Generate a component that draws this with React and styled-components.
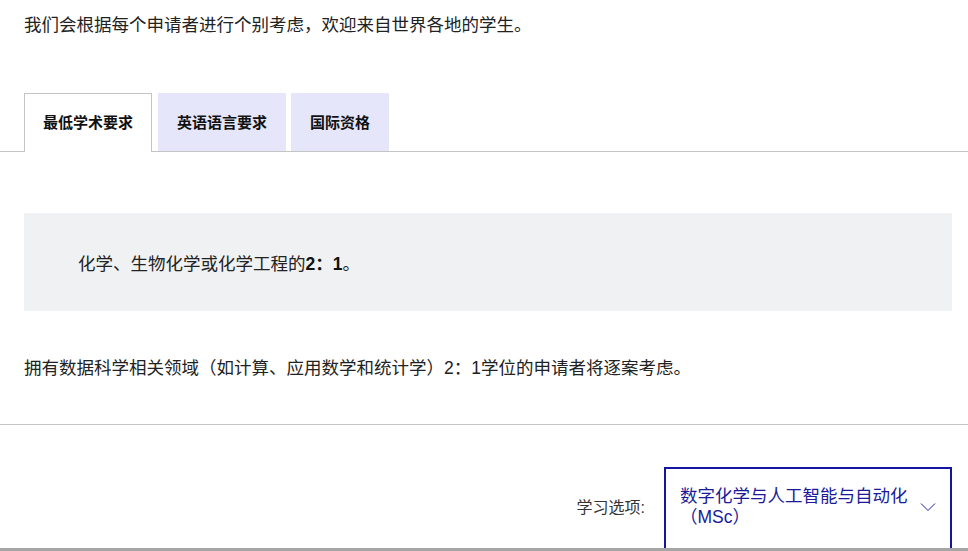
import styled, { createGlobalStyle } from 'styled-components';

const GlobalStyle = createGlobalStyle`
  body {
    margin: 0;
    background: #fff;
    color: #222;
    font-family: "Liberation Sans", "Noto Sans CJK SC", sans-serif;
  }
`;

const tabs = ['最低学术要求', '英语语言要求', '国际资格'];

const App = () => {
  return (
    <Page>
      <GlobalStyle />
      <Intro>我们会根据每个申请者进行个别考虑，欢迎来自世界各地的学生。</Intro>

      <TabBar>
        {tabs.map((t, i) => (
          <Tab key={t} active={i === 0}>{t}</Tab>
        ))}
      </TabBar>

      <Panel>
        <Callout>
          化学、生物化学或化学工程的<strong>2：1</strong>。
        </Callout>
        <Note>拥有数据科学相关领域（如计算、应用数学和统计学）2：1学位的申请者将逐案考虑。</Note>
      </Panel>

      <Footer>
        <Label>学习选项:</Label>
        <Select>
          <SelectText>数字化学与人工智能与自动化（MSc）</SelectText>
          <svg width="16" height="10" viewBox="0 0 16 10" fill="none">
            <path d="M1 1.5l7 7 7-7" stroke="#1a1a9a" strokeWidth="1" />
          </svg>
        </Select>
      </Footer>
    </Page>
  );
};

export default App;

const Page = styled.div`
  width: 968px;
  height: 551px;
  overflow: hidden;
  display: flex;
  flex-direction: column;
`;

const Intro = styled.p`
  margin: 0;
  padding: 12px 24px 0;
  font-size: 17.5px;
  line-height: 26px;
`;

const TabBar = styled.div`
  display: flex;
  gap: 5px;
  margin-top: 55px;
  padding: 0 24px;
  border-bottom: 1px solid #c4c4c4;
  height: 58px;
`;

const Tab = styled.div`
  display: flex;
  align-items: center;
  padding: 0 18px 3px;
  font-size: 15px;
  font-weight: bold;
  color: #111;
  background: ${p => (p.active ? '#fff' : '#e6e6fa')};
  border: 1px solid ${p => (p.active ? '#c4c4c4' : '#e6e6fa')};
  border-bottom: none;
  margin-bottom: ${p => (p.active ? '-1px' : '0')};
  box-sizing: border-box;
  &:first-child {
    margin-right: 1px;
  }
`;

const Panel = styled.div`
  padding: 61px 16px 0 24px;
  border-bottom: 1px solid #c4c4c4;
  height: 273px;
  box-sizing: border-box;
`;

const Callout = styled.div`
  background: #f0f1f3;
  height: 98px;
  display: flex;
  align-items: center;
  padding-left: 54px;
  font-size: 17.5px;
  strong {
    font-weight: bold;
    color: #111;
  }
`;

const Note = styled.p`
  margin: 44px 0 0;
  font-size: 17.5px;
  line-height: 26px;
`;

const Footer = styled.div`
  flex: 1;
  display: flex;
  align-items: flex-end;
  justify-content: flex-end;
  gap: 19px;
  padding-right: 16px;
  border-bottom: 3px solid #a6a6a6;
`;

const Label = styled.span`
  font-size: 16px;
  color: #333;
  margin-bottom: 30px;
`;

const Select = styled.div`
  width: 288px;
  height: 81px;
  box-sizing: border-box;
  border: 2px solid #1414a0;
  border-bottom: none;
  display: flex;
  align-items: center;
  justify-content: space-between;
  padding: 0 14px 3px;
  color: #1a1a9a;
`;

const SelectText = styled.span`
  width: 232px;
  font-size: 17.5px;
  line-height: 21px;
`;
